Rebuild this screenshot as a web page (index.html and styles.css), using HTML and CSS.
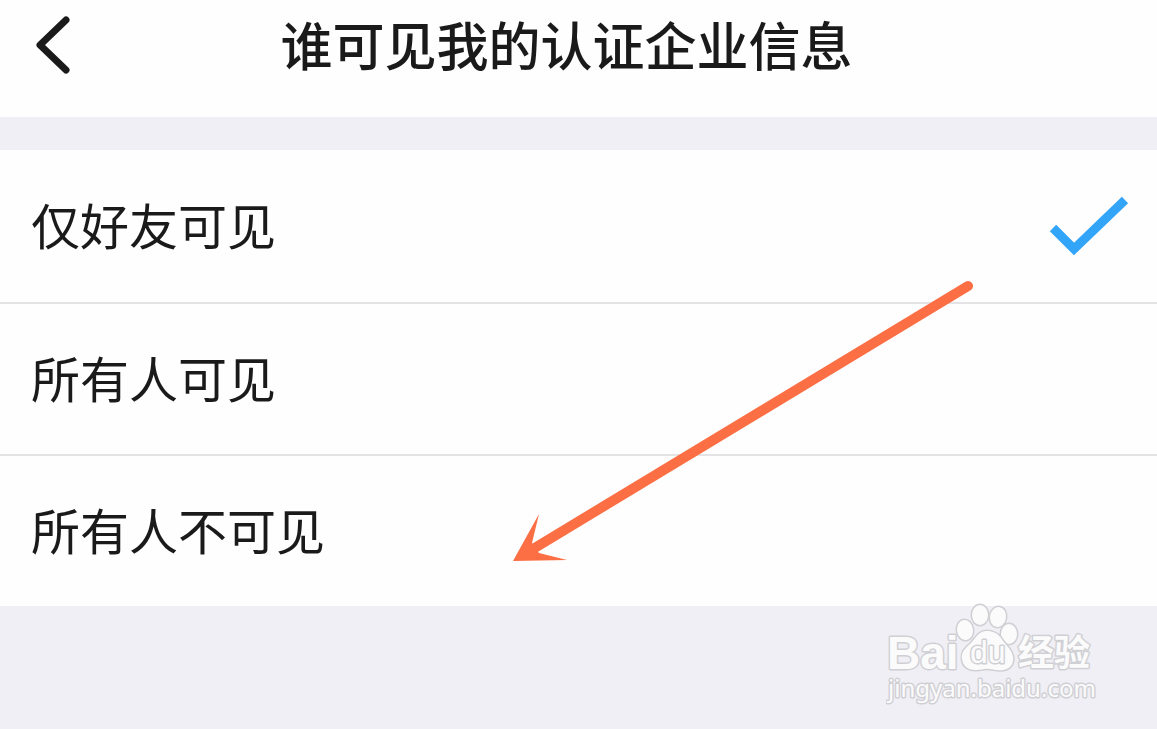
FILE: index.html
```html
<!DOCTYPE html>
<html lang="zh-CN">
<head>
  <meta charset="utf-8">
  <meta name="viewport" content="width=device-width, initial-scale=1">
  <title>谁可见我的认证企业信息</title>
  <link rel="stylesheet" href="styles.css">
</head>
<body class="page">
  <header class="topbar">
    <button class="back" type="button" aria-label="返回">
      <svg class="back-icon" viewBox="0 0 36 60" aria-hidden="true">
        <path d="M30 5 4 30 30 55" />
      </svg>
    </button>
    <h1 class="title">谁可见我的认证企业信息</h1>
  </header>

  <main class="content">
    <div class="options" role="radiogroup" aria-label="谁可见我的认证企业信息">
      <label class="option">
        <span class="option-text">仅好友可见</span>
        <input class="option-radio" type="radio" name="visibility" value="friends" checked>
        <svg class="check" viewBox="0 0 80 60" aria-hidden="true"><path d="M4 32 25 53 76 4" /></svg>
      </label>
      <label class="option">
        <span class="option-text">所有人可见</span>
        <input class="option-radio" type="radio" name="visibility" value="everyone">
        <svg class="check" viewBox="0 0 80 60" aria-hidden="true"><path d="M4 32 25 53 76 4" /></svg>
      </label>
      <label class="option">
        <span class="option-text">所有人不可见</span>
        <input class="option-radio" type="radio" name="visibility" value="nobody">
        <svg class="check" viewBox="0 0 80 60" aria-hidden="true"><path d="M4 32 25 53 76 4" /></svg>
      </label>
    </div>
    <svg class="arrow" viewBox="0 0 460 282" aria-hidden="true">
      <path class="arrow-line" d="M455 6 20 269" />
      <path class="arrow-head" d="M0 281 26 234 19 263 26 273 54 280Z" />
    </svg>
  </main>

  <svg class="watermark" viewBox="0 0 212 106" role="img" aria-label="Baidu 经验 jingyan.baidu.com">
    <text class="mark mark-brand" x="1" y="69">Bai</text>
    <g class="mark">
      <ellipse cx="79" cy="30" rx="8" ry="10" transform="rotate(-8 79 30)" />
      <ellipse cx="94" cy="15" rx="8" ry="10" />
      <ellipse cx="112" cy="17" rx="8" ry="10" transform="rotate(10 112 17)" />
      <ellipse cx="123" cy="34" rx="8" ry="10" />
      <path d="M101 31C92 31 90 38 85 43C80 48 75 51 76 59C77 67 83 70 90 70C96 70 98 68 103 69C108 69 111 71 117 70C124 69 128 64 127 57C126 49 119 45 115 38C111 33 107 31 101 31Z" />
    </g>
    <text class="mark mark-du" x="84" y="63">du</text>
    <text class="mark mark-cn" x="132" y="66">经验</text>
    <text class="mark mark-url" x="2" y="97">jingyan.baidu.com</text>
  </svg>
</body>
</html>
```
FILE: styles.css
```css
* {
  box-sizing: border-box;
}

.page {
  position: relative;
  min-height: 100vh;
  margin: 0;
  background: #f0eff5;
  color: #1a1a1a;
  font-family: "Noto Sans CJK SC", sans-serif;
}

.topbar {
  display: grid;
  grid-template-columns: 104px 1fr 128px;
  align-items: start;
  height: 117px;
  background: #fefefe;
}

.back {
  padding: 15px 0 0 36px;
  border: 0;
  background: none;
  text-align: left;
  cursor: pointer;
}

.back-icon {
  display: block;
  width: 36px;
  height: 60px;
  fill: none;
  stroke: #1a1a1a;
  stroke-width: 7;
  stroke-linecap: round;
  stroke-linejoin: round;
}

.title {
  margin: 0;
  padding-top: 6px;
  font-size: 52px;
  font-weight: 500;
  line-height: 76px;
  text-align: center;
  white-space: nowrap;
}

.content {
  position: relative;
  margin-top: 33px;
}

.options {
  background: #fefefe;
}

.option {
  display: grid;
  grid-template-columns: 1fr 80px;
  align-items: center;
  min-height: 152px;
  padding: 0 28px 0 31px;
  cursor: pointer;
}

.option + .option {
  border-top: 2px solid #e4e4e6;
}

.option-text {
  padding-bottom: 4px;
  font-size: 49px;
  line-height: 72px;
}

.option-radio,
.check {
  grid-column: 2;
  grid-row: 1;
  width: 80px;
  height: 60px;
  margin: 0;
}

.option-radio {
  appearance: none;
}

.check {
  visibility: hidden;
  fill: none;
  stroke: #33a5f8;
  stroke-width: 9;
  pointer-events: none;
}

.option-radio:checked + .check {
  visibility: visible;
}

.arrow {
  position: absolute;
  top: 130px;
  right: 184px;
  width: 460px;
  height: 282px;
  pointer-events: none;
}

.arrow-line {
  fill: none;
  stroke: #fc6e43;
  stroke-width: 10;
  stroke-linecap: round;
}

.arrow-head {
  fill: #fc6e43;
}

.watermark {
  position: absolute;
  right: 59px;
  bottom: 23px;
  width: 212px;
  height: 106px;
}

.mark {
  fill: #fbfbfc;
  stroke: #d0d0d4;
  stroke-width: 3;
  stroke-linejoin: round;
  paint-order: stroke;
}

.mark-brand {
  font: bold 46px "Liberation Sans", Arial, sans-serif;
}

.mark-du {
  font: 32px "Liberation Sans", Arial, sans-serif;
}

.mark-cn {
  font: bold 36px "Noto Sans CJK SC", sans-serif;
}

.mark-url {
  font: 24px "Noto Sans", sans-serif;
}
```
